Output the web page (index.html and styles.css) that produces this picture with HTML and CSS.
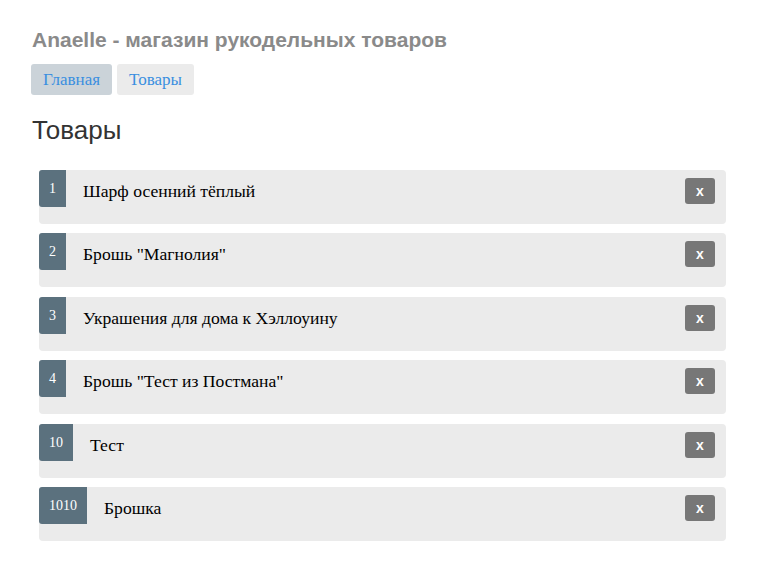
FILE: index.html
```html
<!DOCTYPE html>
<html lang="ru">
<head>
<meta charset="utf-8">
<title>Anaelle</title>
<link rel="stylesheet" href="styles.css">
</head>
<body>
<div class="page">
  <h1 class="brand">Anaelle - магазин рукодельных товаров</h1>
  <nav class="nav">
    <a class="nav-link active" href="#">Главная</a>
    <a class="nav-link" href="#">Товары</a>
  </nav>
  <h2 class="heading">Товары</h2>
  <ul class="list">
    <li class="item"><span class="badge">1</span><span class="name">Шарф осенний тёплый</span><button class="del">x</button></li>
    <li class="item"><span class="badge">2</span><span class="name">Брошь "Магнолия"</span><button class="del">x</button></li>
    <li class="item"><span class="badge">3</span><span class="name">Украшения для дома к Хэллоуину</span><button class="del">x</button></li>
    <li class="item"><span class="badge">4</span><span class="name">Брошь "Тест из Постмана"</span><button class="del">x</button></li>
    <li class="item"><span class="badge">10</span><span class="name">Тест</span><button class="del">x</button></li>
    <li class="item"><span class="badge">1010</span><span class="name">Брошка</span><button class="del">x</button></li>
  </ul>
</div>
</body>
</html>
```
FILE: styles.css
```css
html, body {
  margin: 0;
  padding: 0;
  background: #fff;
}
.page {
  padding: 28px 0 0 31px;
  font-family: "Liberation Serif", "Times New Roman", serif;
}
.brand {
  margin: 0 0 0 1px;
  font-family: "Liberation Sans", Arial, sans-serif;
  font-size: 21px;
  line-height: 24px;
  font-weight: bold;
  color: #8a8a8a;
}
.nav {
  display: flex;
  gap: 5px;
  margin-top: 12px;
}
.nav-link {
  display: block;
  padding: 0 12px;
  height: 31px;
  line-height: 31px;
  font-size: 17px;
  color: #3a8fe0;
  text-decoration: none;
  background: #ebebeb;
  border-radius: 3px;
}
.nav-link.active {
  background: #cbd3d9;
}
.heading {
  margin: 20px 0 0 1px;
  font-family: "Liberation Sans", Arial, sans-serif;
  font-weight: normal;
  font-size: 26px;
  line-height: 30px;
  color: #333;
}
.list {
  list-style: none;
  margin: 25px 0 0 8px;
  padding: 0;
  width: 687px;
}
.item {
  display: flex;
  align-items: flex-start;
  height: 54px;
  margin-bottom: 9.4px;
  background: #ebebeb;
  border-radius: 4px;
}
.badge {
  height: 37px;
  line-height: 37px;
  padding: 0 10px;
  font-size: 14px;
  color: #fff;
  background: #5b717e;
  border-radius: 3px 0 0 3px;
}
.name {
  margin-left: 17px;
  line-height: 42px;
  font-size: 17.6px;
  color: #000;
  flex: 1;
}
.del {
  margin: 8px 11px 0 0;
  width: 30px;
  height: 26px;
  padding: 0;
  border: none;
  border-radius: 3px;
  background: #777;
  color: #fff;
  font-family: "Liberation Sans", Arial, sans-serif;
  font-weight: bold;
  font-size: 14px;
  line-height: 26px;
}
```
